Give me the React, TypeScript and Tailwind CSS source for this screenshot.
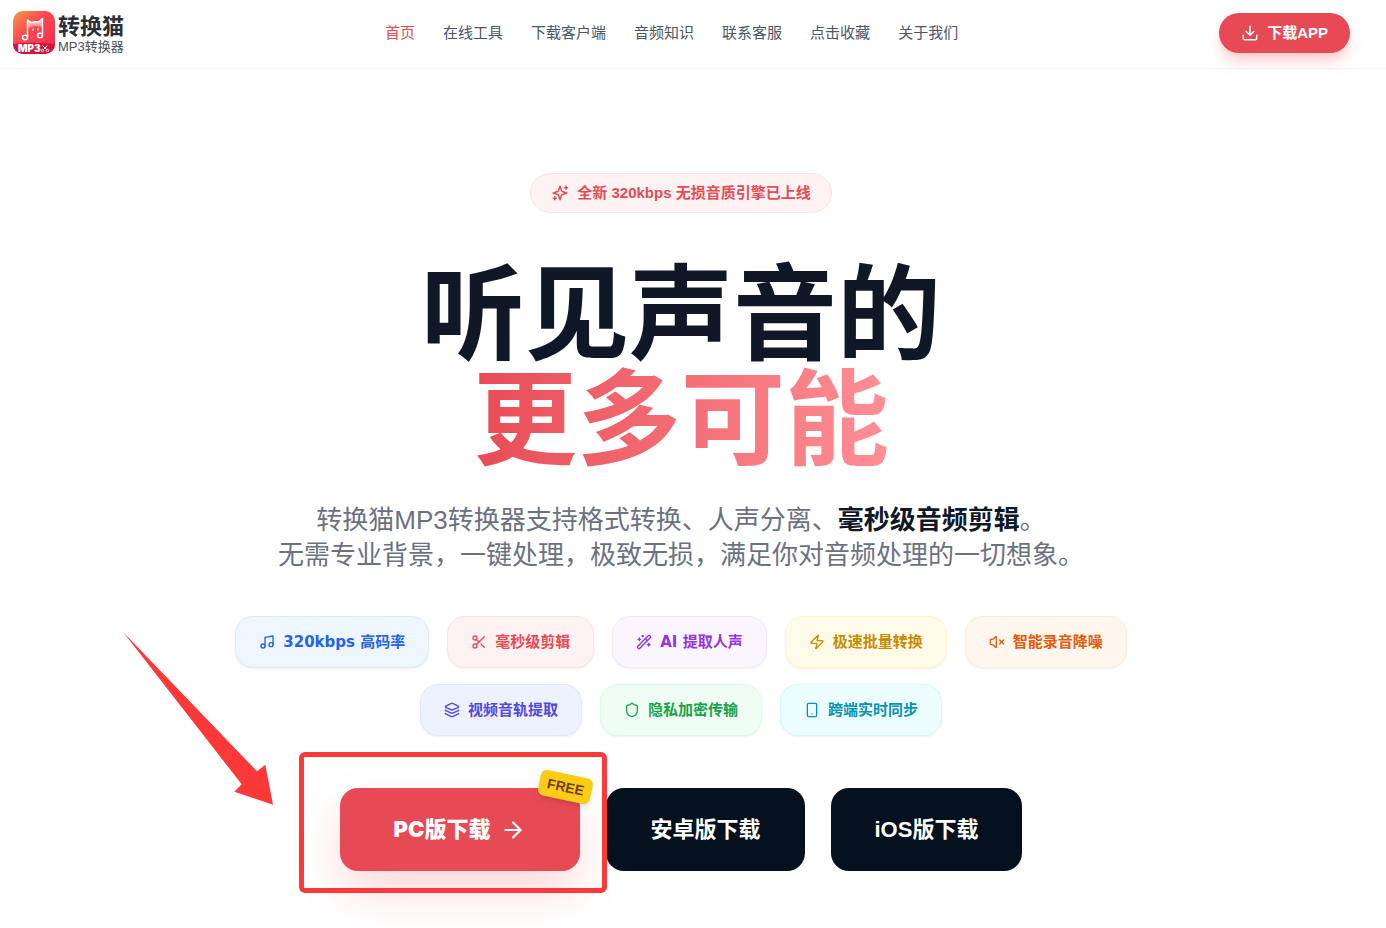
import React from 'react'
import {
    ArrowRight,
    Download,
    Layers,
    LucideIcon,
    Music,
    Scissors,
    Shield,
    Smartphone,
    VolumeX,
    WandSparkles,
    Zap
} from 'lucide-react'

interface IFeature {
    label: string
    icon: LucideIcon
    color: string
}

const NAV = ['首页', '在线工具', '下载客户端', '音频知识', '联系客服', '点击收藏', '关于我们']

const FEATURES: IFeature[] = [
    { label: '320kbps 高码率', icon: Music, color: 'bg-[#eff6ff] border-[#dbeafe] text-[#2563eb]' },
    { label: '毫秒级剪辑', icon: Scissors, color: 'bg-[#fef2f2] border-[#fee2e2] text-[#e84a55]' },
    { label: 'AI 提取人声', icon: WandSparkles, color: 'bg-[#faf5ff] border-[#f3e8ff] text-[#9333ea]' },
    { label: '极速批量转换', icon: Zap, color: 'bg-[#fefce8] border-[#fef9c3] text-[#ca8a04]' },
    { label: '智能录音降噪', icon: VolumeX, color: 'bg-[#fff7ed] border-[#ffedd5] text-[#ea580c]' },
    { label: '视频音轨提取', icon: Layers, color: 'bg-[#eef2ff] border-[#e0e7ff] text-[#4f46e5]' },
    { label: '隐私加密传输', icon: Shield, color: 'bg-[#f0fdf4] border-[#dcfce7] text-[#16a34a]' },
    { label: '跨端实时同步', icon: Smartphone, color: 'bg-[#ecfeff] border-[#cffafe] text-[#0891b2]' }
]

const Logo = () => {
    return (
        <a href="#" className="flex items-center gap-0.5">
            <svg width="44" height="44" viewBox="0 0 44 44" aria-hidden="true">
                <defs>
                    <linearGradient id="logo-bg" x1="0" y1="0" x2="1" y2="1">
                        <stop offset="0" stopColor="#fb9a4b" />
                        <stop offset="0.4" stopColor="#fb4a50" />
                        <stop offset="1" stopColor="#f5264f" />
                    </linearGradient>
                    <linearGradient id="logo-note" x1="0" y1="0" x2="0" y2="1">
                        <stop offset="0" stopColor="#fff" />
                        <stop offset="1" stopColor="#fff" stopOpacity="0.1" />
                    </linearGradient>
                    <clipPath id="logo-clip">
                        <rect x="1" y="0" width="42" height="43" rx="10" />
                    </clipPath>
                </defs>
                <g clipPath="url(#logo-clip)">
                    <rect width="44" height="44" fill="url(#logo-bg)" />
                    <path d="M0 33Q22 30.5 44 33V44H0Z" fill="#cf1640" />
                </g>
                <path d="M15.5 9L19 11.5Q23 10.5 27 10.5L30.5 7.5V17Q23 13 15.5 18Z" fill="url(#logo-note)" />
                <path
                    d="M15.5 26V9L19 11.5Q23 10.5 27 10.5L30.5 7.5V24"
                    fill="none"
                    stroke="#fff"
                    strokeWidth="1.4"
                    strokeLinejoin="round"
                />
                <ellipse cx="13" cy="26.5" rx="2.5" ry="2.2" fill="none" stroke="#fff" strokeWidth="1.5" />
                <ellipse cx="28" cy="24.5" rx="2.5" ry="2.2" fill="none" stroke="#fff" strokeWidth="1.5" />
                <path d="M21 18v1.5M26 17.5V19" stroke="#fff" strokeWidth="1.2" strokeLinecap="round" />
                <text x="6" y="41" fill="#fff" fontSize="10" fontWeight="900" fontFamily="Inter, sans-serif">MP3</text>
                <path d="M30.5 34.5l4 4M35.5 34.5l-4 4" stroke="#fff" strokeWidth="1" />
                <circle cx="30.5" cy="39.5" r="1.2" fill="none" stroke="#fff" strokeWidth="0.8" />
                <circle cx="35.5" cy="39.5" r="1.2" fill="none" stroke="#fff" strokeWidth="0.8" />
            </svg>
            <span className="flex flex-col pt-1">
                <span className="text-[22px] leading-6 font-bold text-[#2b2f38]">转换猫</span>
                <span className="text-[13px] leading-4 text-[#4b5058]">MP3转换器</span>
            </span>
        </a>
    )
}

const Header = () => {
    return (
        <header className="flex h-[69px] items-center justify-between border-b border-gray-100 pr-9 pb-0.5 pl-3">
            <Logo />

            <nav className="flex gap-7 text-[15px]">
                {NAV.map((item, i) => (
                    <a key={item} href="#" className={i === 0 ? 'text-[#e84a55]' : 'text-gray-600'}>
                        {item}
                    </a>
                ))}
            </nav>

            <button className="flex h-10 items-center gap-2 rounded-full bg-[#e84a55] px-[22px] text-[15px] font-bold text-white shadow-lg shadow-red-200">
                <Download size={18} />
                下载APP
            </button>
        </header>
    )
}

const SparkIcon = () => {
    return (
        <svg
            width="18"
            height="18"
            viewBox="0 0 24 24"
            fill="none"
            stroke="currentColor"
            strokeWidth="2"
            strokeLinecap="round"
            strokeLinejoin="round"
            aria-hidden="true"
        >
            <path d="m12 3-1.912 5.813a2 2 0 0 1-1.275 1.275L3 12l5.813 1.912a2 2 0 0 1 1.275 1.275L12 21l1.912-5.813a2 2 0 0 1 1.275-1.275L21 12l-5.813-1.912a2 2 0 0 1-1.275-1.275L12 3Z" />
            <path d="M5 17v4M3 19h4M20 3v4M18 5h4" />
        </svg>
    )
}

const FeatureChip = ({ feature }: { feature: IFeature }) => {
    const Icon = feature.icon
    return (
        <li
            className={`flex h-[52px] items-center gap-2 rounded-[18px] border px-[23px] text-[15px] font-bold shadow-sm shadow-black/5 ${feature.color}`}
        >
            <Icon size={16} />
            {feature.label}
        </li>
    )
}

// Red frame and arrow pointing at the PC download
const Highlight = () => {
    return (
        <>
            <div className="pointer-events-none absolute -top-9 -right-[27px] -bottom-[22px] -left-[41px] z-10 rounded-md border-[5px] border-[#fd3838]" />
            <svg
                className="pointer-events-none absolute -top-[156px] -left-[217px]"
                width="152"
                height="174"
                viewBox="0 0 152 174"
                aria-hidden="true"
            >
                <path d="M0.3 0.3L134 139.3L142.3 132.7L150 172.7L111.3 159.7L118.7 152.3Z" fill="#fd3838" />
            </svg>
        </>
    )
}

export default function App() {
    return (
        <div className="min-h-screen overflow-x-hidden bg-white font-['Liberation_Sans','Noto_Sans_CJK_SC',sans-serif]">
            <Header />

            <main className="flex flex-col items-center pt-[104px] pr-6 pb-14 text-center">
                {/* BADGE */}
                <div className="flex h-10 items-center gap-2 rounded-full border border-[#fee2e2] bg-[#fef2f2] px-5 text-[15px] font-bold text-[#e84a55]">
                    <SparkIcon />
                    全新 320kbps 无损音质引擎已上线
                </div>

                <h1 className="mt-[51px] text-[104px] leading-[105px] font-bold text-gray-900">
                    听见声音的
                    {/* the padding keeps the clipped gradient from cutting the glyph tops */}
                    <span className="mx-auto -mt-2 block w-fit bg-linear-to-r from-[#e84a55] to-[#ff8e96] bg-clip-text pt-2 text-transparent">
                        更多可能
                    </span>
                </h1>

                <p className="mt-[29px] text-[26px] leading-[35px] text-gray-500">
                    转换猫MP3转换器支持格式转换、人声分离、<strong className="text-gray-900">毫秒级音频剪辑</strong>。
                    <br />
                    无需专业背景，一键处理，极致无损，满足你对音频处理的一切想象。
                </p>

                {/* FEATURES */}
                <ul className="mt-[43px] flex max-w-[960px] flex-wrap justify-center gap-x-[18px] gap-y-4 font-['DejaVu_Sans','Noto_Sans_CJK_SC',sans-serif]">
                    {FEATURES.map((feature) => (
                        <FeatureChip key={feature.label} feature={feature} />
                    ))}
                </ul>

                {/* DOWNLOADS */}
                <div className="mt-[52px] flex gap-[26px] text-[22px] font-bold text-white">
                    <div className="relative">
                        <button className="flex h-[83px] items-center gap-2.5 rounded-[18px] bg-[#e84a55] px-[54px] font-[Inter,'Noto_Sans_CJK_SC',sans-serif] font-black shadow-[0_22px_50px_-4px_#fed4d4]">
                            PC版下载
                            <ArrowRight size={26} />
                        </button>
                        <span className="absolute -top-3.5 -right-3 rotate-12 rounded-md bg-[#facc15] px-2 py-1 text-sm leading-[18px] text-[#713f12] shadow-md">
                            FREE
                        </span>
                        <Highlight />
                    </div>
                    <button className="relative h-[83px] rounded-[18px] bg-[#06111f] px-11">安卓版下载</button>
                    <button className="relative h-[83px] rounded-[18px] bg-[#06111f] px-11">iOS版下载</button>
                </div>
            </main>
        </div>
    )
}
